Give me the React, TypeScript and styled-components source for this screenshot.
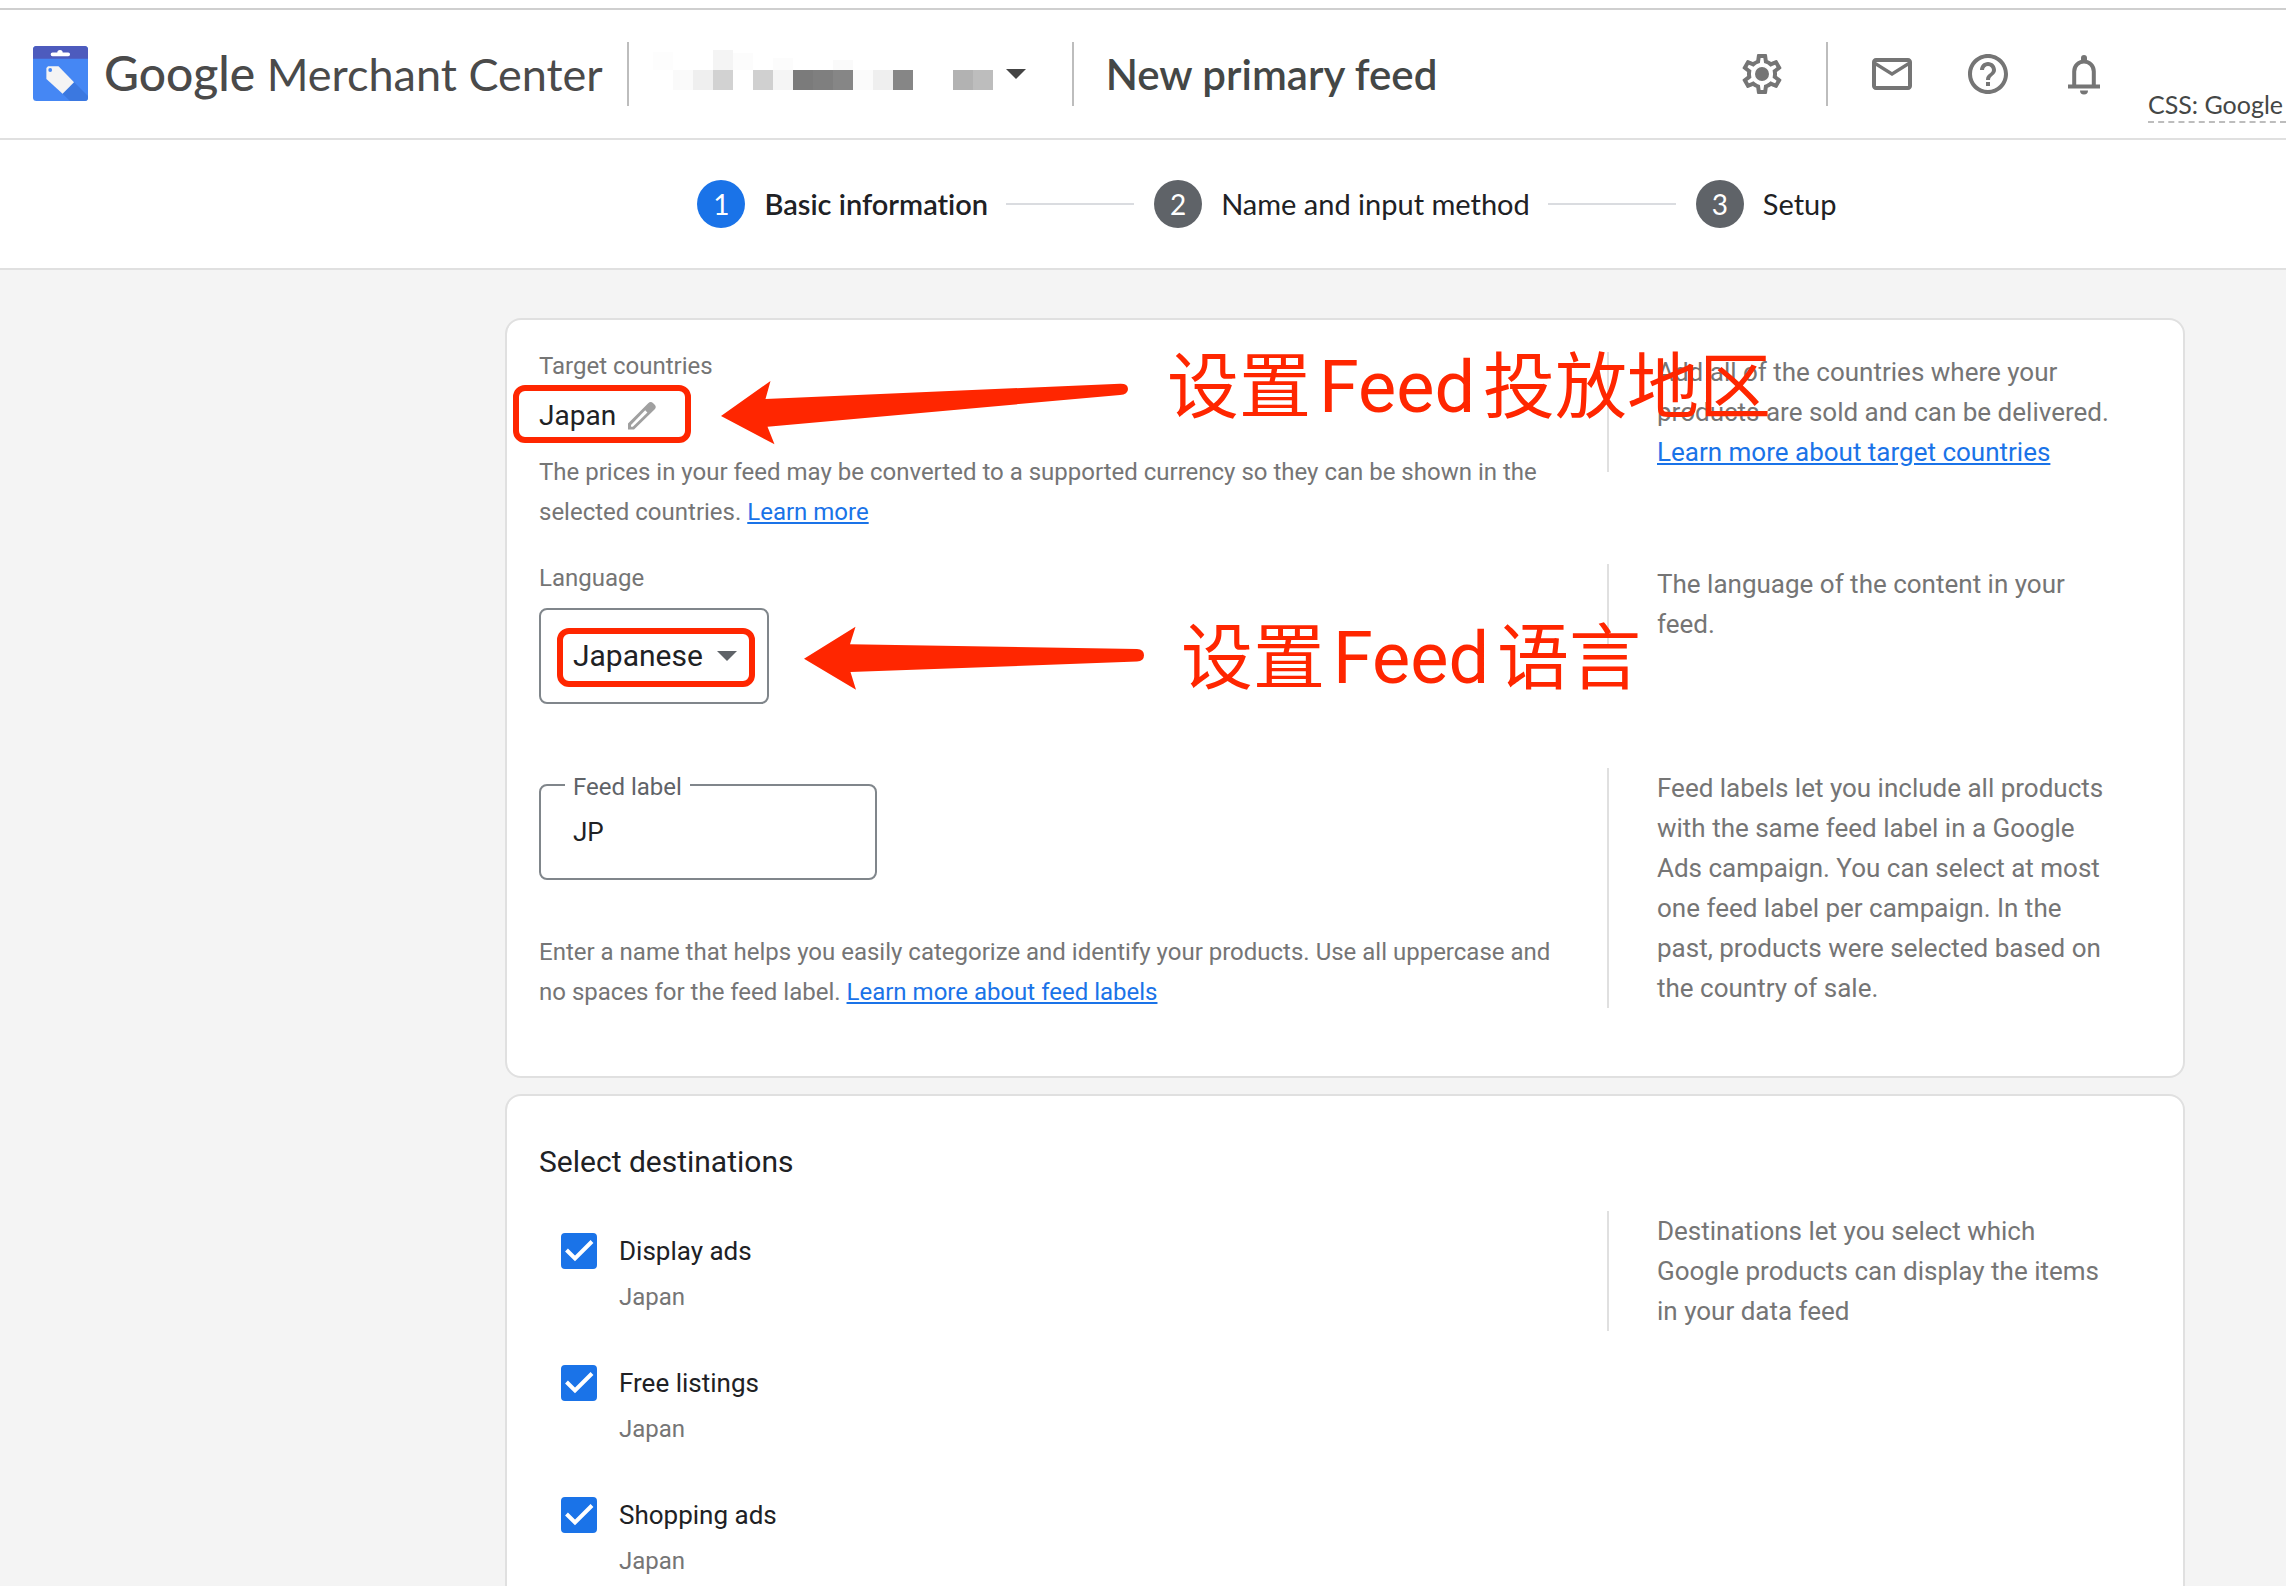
import React from "react";
import styled, { createGlobalStyle, css } from "styled-components";
import { MdHelpOutline, MdMailOutline, MdOutlineSettings } from "react-icons/md";

const color = {
  text: "#202124",
  title: "#444746",
  muted: "#757575",
  icon: "#757575",
  line: "#e0e0e0",
  field: "#80868b",
  blue: "#1a73e8",
  grey: "#5f6368",
  page: "#f4f4f4",
  mark: "#ff2600",
};

const display = `Lato, "Open Sans", sans-serif`;

const GlobalStyle = createGlobalStyle`
  *, *::before, *::after { box-sizing: border-box; }
  body {
    margin: 0;
    background: #fff;
    color: ${color.text};
    font-family: Roboto, "Noto Sans CJK SC", sans-serif;
    font-variant-ligatures: none;
  }
  h1, h2, p, ol, ul { margin: 0; padding: 0; font-weight: 400; list-style: none; }
  button, input, select { font: inherit; color: inherit; }
`;

const Shell = styled.div`
  display: flex;
  flex-direction: column;
  height: 100vh;
  padding-top: 8px;
`;

/* ---------- top bar ---------- */

const TopBar = styled.header`
  display: flex;
  align-items: center;
  flex: none;
  height: 132px;
  padding-left: 33px;
  border-top: 2px solid #cfcfcf;
  border-bottom: 2px solid ${color.line};
  overflow: hidden;
`;

const Brand = styled.a`
  display: flex;
  align-items: center;
  gap: 16px;
  margin: 0 24px 2px 0;
  color: #4a4a4a;
  text-decoration: none;
  font-family: ${display};
  white-space: nowrap;
`;

const BrandName = styled.span`
  font-size: 45px;
  line-height: 56px;
`;

const BrandStrong = styled.span`
  font-size: 48px;
  font-weight: 500;
`;

const Divider = styled.span`
  flex: none;
  width: 2px;
  height: 64px;
  background: #bdbdbd;
`;

const AccountButton = styled.button`
  display: flex;
  align-items: center;
  gap: 12px;
  margin: 0 46px 0 24px;
  padding: 0;
  border: 0;
  background: none;
`;

const PageTitle = styled.h1`
  && { font-weight: 600; }
  margin-left: 32px;
  font-family: ${display};
  font-size: 42px;
  line-height: 56px;
  color: ${color.title};
  white-space: nowrap;
`;

const Tools = styled.div`
  display: flex;
  align-items: center;
  align-self: stretch;
  gap: 40px;
  margin-left: auto;
`;

const IconGroup = styled.div`
  display: flex;
  gap: 48px;
`;

const IconButton = styled.button`
  display: grid;
  place-items: center;
  width: 48px;
  height: 48px;
  padding: 0;
  border: 0;
  background: none;
  color: ${color.icon};
`;

const CssLink = styled.a`
  align-self: flex-end;
  width: 138px;
  margin-bottom: 15px;
  padding-bottom: 1px;
  border-bottom: 2px dashed #bdbdbd;
  font: 25px/32px ${display};
  color: ${color.title};
  text-decoration: none;
  white-space: nowrap;
`;

/* ---------- stepper ---------- */

const Stepper = styled.ol`
  display: flex;
  flex: none;
  align-items: center;
  justify-content: center;
  height: 130px;
  && { padding-left: 248px; }
  border-bottom: 2px solid ${color.line};
  font-family: ${display};
`;

const Step = styled.li`
  display: flex;
  align-items: center;

  & + &::before {
    content: "";
    width: 128px;
    height: 2px;
    margin: 0 20px 0 18px;
    background: #dadce0;
  }
`;

const StepNumber = styled.span<{ $active?: boolean }>`
  display: grid;
  place-items: center;
  width: 48px;
  height: 48px;
  margin-right: 19px;
  border-radius: 50%;
  background: ${(p) => (p.$active ? color.blue : color.grey)};
  color: #fff;
  font-size: 28px;
`;

const StepLabel = styled.span<{ $active?: boolean }>`
  font-size: 29px;
  line-height: 40px;
  font-weight: ${(p) => (p.$active ? 600 : 400)};
`;

/* ---------- cards ---------- */

const Main = styled.main`
  display: flex;
  flex: 1;
  flex-direction: column;
  gap: 16px;
  min-height: 0;
  padding: 48px 101px 48px 505px;
  overflow-y: auto;
  scrollbar-width: none;
  background: ${color.page};
`;

const Card = styled.section`
  position: relative;
  display: flex;
  flex: none;
  flex-direction: column;
  padding: 32px 32px 64px;
  border: 2px solid ${color.line};
  border-radius: 16px;
  background: #fff;
`;

const Row = styled.div<{ $gap?: number }>`
  display: grid;
  grid-template-columns: minmax(0, 1fr) 544px;
  column-gap: 40px;
  align-items: start;
  margin-top: ${(p) => p.$gap ?? 0}px;
`;

const Aside = styled.aside`
  padding: 0 36px 0 48px;
  border-left: 2px solid ${color.line};
  font-size: 26px;
  line-height: 40px;
  color: ${color.muted};
`;

const TextLink = styled.a`
  color: ${color.blue};
  text-decoration: underline;
`;

const FieldLabel = styled.label`
  display: block;
  font-size: 24px;
  line-height: 28px;
  color: ${color.muted};
`;

const Help = styled.p<{ $gap: number }>`
  && { margin-top: ${(p) => p.$gap}px; }
  font-size: 24px;
  line-height: 40px;
  color: ${color.muted};
`;

const highlight = css`
  content: "";
  position: absolute;
  border: 6px solid ${color.mark};
  border-radius: 12px;
  pointer-events: none;
`;

const EditButton = styled.button`
  position: relative;
  display: flex;
  align-items: center;
  gap: 12px;
  height: 32px;
  margin-top: 20px;
  padding: 0;
  border: 0;
  background: none;
  font-size: 28px;
  line-height: 32px;

  &::after {
    ${highlight}
    inset: -15px -35px -11px -26px;
  }
`;

const SelectBox = styled.div`
  position: relative;
  display: grid;
  align-items: center;
  width: 230px;
  margin-top: 16px;

  &::after {
    ${highlight}
    inset: 20px 14px 17px 18px;
  }
`;

const Select = styled.select`
  grid-area: 1 / 1;
  width: 100%;
  height: 96px;
  padding: 0 32px 2px;
  border: 2px solid ${color.field};
  border-radius: 8px;
  background: none;
  appearance: none;
  font-size: 30px;
`;

const SelectArrow = styled.svg`
  grid-area: 1 / 1;
  justify-self: end;
  margin-right: 32px;
  pointer-events: none;
`;

const Outline = styled.fieldset`
  width: 338px;
  height: 112px;
  margin: 0;
  padding: 0 24px;
  border: 2px solid ${color.field};
  border-radius: 8px;
`;

const OutlineLegend = styled.legend`
  padding: 4px 8px 0;
  font-size: 24px;
  line-height: 30px;
  color: ${color.grey};
`;

const TextInput = styled.input`
  display: block;
  width: 100%;
  height: 60px;
  padding: 0 8px;
  border: 0;
  outline: 0;
  background: none;
  font-size: 26px;
`;

/* ---------- destinations ---------- */

const DestinationCard = styled(Card)`
  padding-top: 46px;
`;

const CardTitle = styled.h2`
  font-size: 30px;
  line-height: 40px;
`;

const Destinations = styled.ul`
  display: grid;
  gap: 50px;
  && { padding: 20px 0 0 22px; }
`;

const Destination = styled.li`
  display: grid;
  grid-template-columns: 36px 1fr;
  column-gap: 22px;
  align-items: center;
`;

const Tick = styled.span`
  display: grid;
  width: 36px;
  height: 36px;

  & > * { grid-area: 1 / 1; }
  & > svg { pointer-events: none; }
`;

const Checkbox = styled.input`
  width: 36px;
  height: 36px;
  margin: 0;
  border: 4px solid ${color.grey};
  border-radius: 4px;
  appearance: none;

  &:checked {
    border-color: ${color.blue};
    background: ${color.blue};
  }
`;

const DestinationName = styled.label`
  font-size: 26px;
  line-height: 40px;
`;

const DestinationCountry = styled.span`
  grid-column: 2;
  margin-top: 10px;
  font-size: 24px;
  line-height: 32px;
  color: ${color.muted};
`;

/* ---------- red notes over the form ---------- */

const Arrows = styled.svg`
  position: absolute;
  top: 0;
  left: 0;
  fill: ${color.mark};
  pointer-events: none;
`;

const Note = styled.p<{ $x: number; $y: number }>`
  position: absolute;
  top: ${(p) => p.$y}px;
  left: ${(p) => p.$x}px;
  display: flex;
  gap: 8px;
  font: 400 72px/80px Roboto, "Noto Sans CJK SC", sans-serif;
  color: ${color.mark};
  white-space: nowrap;
  pointer-events: none;
`;

/* ---------- drawings ---------- */

const LogoMark = () => (
  <svg width="55" height="55" viewBox="0 0 55 55" aria-hidden="true">
    <rect width="55" height="55" rx="3.5" fill="#4587f4" />
    <path d="M41 36 55 50v1.5a3.5 3.5 0 0 1-3.5 3.5H37l-7.4-7.3z" fill="#3b78e0" />
    <path d="M3.5 0h48A3.5 3.5 0 0 1 55 3.5v9.3H0V3.5A3.5 3.5 0 0 1 3.5 0z" fill="#4d5bbd" />
    <path d="M19.5 6.5h4.8a2.7 2.5 0 0 1 5.4 0h5.5a1.8 1.8 0 0 1 0 3.7H19.5a1.8 1.8 0 0 1 0-3.7z" fill="#fff" />
    <path d="M15 20.3h10.5L41 36.2 29.6 47.8 13.4 33V22z" fill="#f4f4f4" />
    <circle cx="17.2" cy="24" r="1.9" fill="#4587f4" />
  </svg>
);

const MASKED_CELLS: [number, number, number, string][] = [
  [0, 2, 18, "#fdfdfd"], [60, 0, 20, "#f4f4f4"], [80, 3, 17, "#fcfcfc"],
  [120, 8, 12, "#fcfcfc"], [180, 10, 10, "#fafafa"],
  [20, 20, 20, "#fafafa"], [40, 20, 20, "#efefef"], [60, 20, 20, "#d2d2d2"],
  [100, 20, 20, "#d0d0d0"], [120, 20, 20, "#f5f5f5"], [140, 20, 20, "#7b7b7b"],
  [160, 20, 20, "#7f7f7f"], [180, 20, 20, "#868686"], [200, 20, 20, "#fbfbfb"],
  [220, 20, 20, "#efefef"], [240, 20, 20, "#868686"], [300, 20, 20, "#b2b2b2"],
  [320, 20, 20, "#bdbdbd"],
];

const MaskedAccount = () => (
  <svg width="341" height="48" viewBox="0 0 341 48" shapeRendering="crispEdges" aria-hidden="true">
    {MASKED_CELLS.map(([x, y, h, fill]) => (
      <rect key={`${x}-${y}`} x={x} y={y} width="20" height={h} fill={fill} />
    ))}
  </svg>
);

const GearIcon = () => (
  <svg width="48" height="48" viewBox="0 0 24 24" aria-hidden="true">
    <MdOutlineSettings size={24} />
    <circle cx="12" cy="12" r="4.3" fill="#fff" />
    <circle cx="12" cy="12" r="3.5" fill="currentColor" />
  </svg>
);

const BellIcon = () => (
  <svg width="48" height="48" viewBox="0 0 24 24" fill="currentColor" aria-hidden="true">
    <rect x="10.5" y="2.5" width="3" height="4" rx="1.5" />
    <path d="M7.1 18v-7.3a4.9 5 0 0 1 9.8 0V18" fill="none" stroke="currentColor" strokeWidth="2" />
    <path d="M4 17.2h16v2H4zM10 20.2h4a2 2 0 0 1-4 0z" />
  </svg>
);

const PencilIcon = () => (
  <svg width="28" height="28" viewBox="0 0 28 28" aria-hidden="true">
    <path d="M0 27.5v-6L20.2 1.3a3.5 3.5 0 0 1 5 0l1.3 1.3a3.5 3.5 0 0 1 0 5L6 27.5z" fill="#a0a0a0" />
    <path d="M3 24.7v-1.8L17.2 8.2l2.2 2.2L4.8 24.7z" fill="#fff" />
  </svg>
);

const destinations = ["Display ads", "Free listings", "Shopping ads"];

export default function App() {
  return (
    <>
      <GlobalStyle />
      <Shell>
        <TopBar>
          <Brand href="#">
            <LogoMark />
            <BrandName>
              <BrandStrong>Google</BrandStrong> Merchant Center
            </BrandName>
          </Brand>
          <Divider />
          <AccountButton aria-label="Switch account">
            <MaskedAccount />
            <svg width="20" height="10" viewBox="0 0 20 10" aria-hidden="true">
              <path d="M0 0h20L10 10z" fill="#444" />
            </svg>
          </AccountButton>
          <Divider />
          <PageTitle>New primary feed</PageTitle>
          <Tools>
            <IconButton aria-label="Settings"><GearIcon /></IconButton>
            <Divider />
            <IconGroup>
              <IconButton aria-label="Mail"><MdMailOutline size={48} /></IconButton>
              <IconButton aria-label="Help"><MdHelpOutline size={48} /></IconButton>
              <IconButton aria-label="Notifications"><BellIcon /></IconButton>
            </IconGroup>
            <CssLink href="#">CSS: Google</CssLink>
          </Tools>
        </TopBar>

        <Stepper>
          <Step><StepNumber $active>1</StepNumber><StepLabel $active>Basic information</StepLabel></Step>
          <Step><StepNumber>2</StepNumber><StepLabel>Name and input method</StepLabel></Step>
          <Step><StepNumber>3</StepNumber><StepLabel>Setup</StepLabel></Step>
        </Stepper>

        <Main>
          <Card>
            <Row>
              <div>
                <FieldLabel as="div">Target countries</FieldLabel>
                <EditButton>Japan <PencilIcon /></EditButton>
                <Help $gap={20}>
                  The prices in your feed may be converted to a supported currency so they can be shown in the
                  selected countries. <TextLink href="#">Learn more</TextLink>
                </Help>
              </div>
              <Aside>
                Add all of the countries where your products are sold and can be delivered.{" "}
                <TextLink href="#">Learn more about target countries</TextLink>
              </Aside>
            </Row>

            <Row $gap={32}>
              <div>
                <FieldLabel htmlFor="language">Language</FieldLabel>
                <SelectBox>
                  <Select id="language" defaultValue="Japanese">
                    <option>Japanese</option>
                  </Select>
                  <SelectArrow width="20" height="10" viewBox="0 0 20 10" aria-hidden="true">
                    <path d="M0 0h20L10 10z" fill={color.grey} />
                  </SelectArrow>
                </SelectBox>
              </div>
              <Aside>The language of the content in your feed.</Aside>
            </Row>

            <Row $gap={64}>
              <div>
                <Outline>
                  <OutlineLegend><label htmlFor="feed-label">Feed label</label></OutlineLegend>
                  <TextInput id="feed-label" defaultValue="JP" />
                </Outline>
                <Help $gap={52}>
                  Enter a name that helps you easily categorize and identify your products. Use all uppercase and
                  no spaces for the feed label. <TextLink href="#">Learn more about feed labels</TextLink>
                </Help>
              </div>
              <Aside>
                Feed labels let you include all products with the same feed label in a Google Ads campaign. You can
                select at most one feed label per campaign. In the past, products were selected based on the country
                of sale.
              </Aside>
            </Row>

            <Arrows width="640" height="380" viewBox="507 320 640 380" aria-hidden="true">
              <path d="M721 416 770.5 381 765.5 399 1120 383.7q8-.3 8 5.3t-8 6L767.5 426.7 774.5 444.3z" />
              <path d="M804 658.7 855.5 626.7 850 644.3 1137 649q7 .5 7 6.3t-7 6.3L850.5 672 856 689.7z" />
            </Arrows>
            <Note $x={660} $y={28}><span>设置</span><span>Feed</span><span>投放地区</span></Note>
            <Note $x={674} $y={299}><span>设置</span><span>Feed</span><span>语言</span></Note>
          </Card>

          <DestinationCard>
            <CardTitle>Select destinations</CardTitle>
            <Row $gap={29}>
              <Destinations>
                {destinations.map((name, i) => (
                  <Destination key={name}>
                    <Tick>
                      <Checkbox type="checkbox" id={`destination-${i}`} defaultChecked />
                      <svg width="36" height="36" viewBox="0 0 36 36" aria-hidden="true">
                        <path d="M5.5 17 14 25.5 31 8.5" fill="none" stroke="#fff" strokeWidth="4" />
                      </svg>
                    </Tick>
                    <DestinationName htmlFor={`destination-${i}`}>{name}</DestinationName>
                    <DestinationCountry>Japan</DestinationCountry>
                  </Destination>
                ))}
              </Destinations>
              <Aside>
                Destinations let you select which Google products can display the items in your data feed
              </Aside>
            </Row>
          </DestinationCard>
        </Main>
      </Shell>
    </>
  );
}
